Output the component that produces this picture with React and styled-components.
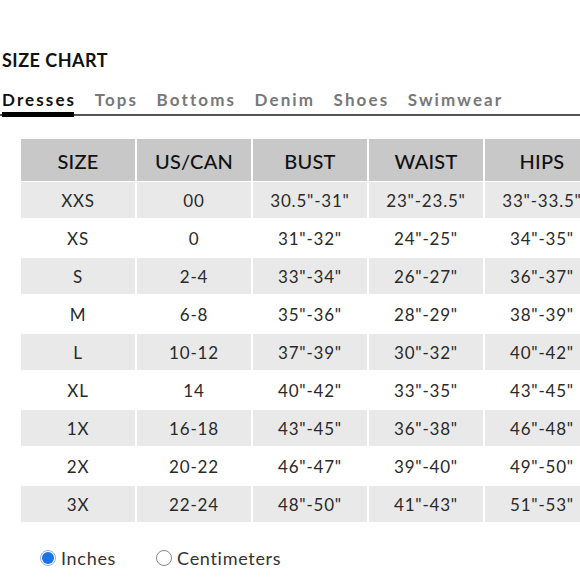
import React from "react";
import styled, { createGlobalStyle } from "styled-components";

const Global = createGlobalStyle`
  html, body { margin: 0; padding: 0; background: #fff; }
  body { font-family: Lato, "Open Sans", Arial, sans-serif; overflow: hidden; }
`;

const Page = styled.div`
  width: 580px;
  height: 580px;
  overflow: hidden;
  padding-top: 50px;
  box-sizing: border-box;
`;

const Title = styled.h2`
  margin: 0 0 0 2px;
  font-size: 18px;
  font-weight: 700;
  line-height: 20px;
  color: #111;
  letter-spacing: 0.5px;
`;

const Tabs = styled.div`
  margin-top: 20px;
  display: flex;
  gap: 18.5px;
  padding-left: 2px;
  border-bottom: 2px solid #555;
  height: 26px;
  box-sizing: border-box;
`;

const Tab = styled.div`
  font-size: 17px;
  font-weight: 700;
  letter-spacing: 2.1px;
  line-height: 20px;
  color: ${(p) => (p.$active ? "#111" : "#787878")};
  position: relative;
  &::after {
    content: "";
    display: ${(p) => (p.$active ? "block" : "none")};
    position: absolute;
    left: 0;
    right: 2px;
    bottom: -3px;
    height: 5px;
    background: #000;
  }
`;

const Table = styled.div`
  margin: 23px 0 0 21px;
  display: grid;
  grid-template-columns: repeat(5, 116px);
  width: 580px;
`;

const HeadCell = styled.div`
  background: #c8c8c8;
  height: 43px;
  display: flex;
  align-items: center;
  justify-content: center;
  padding-top: 2px;
  font-size: 20px;
  font-weight: 500;
  color: #111;
  border-right: 2px solid #fff;
  border-bottom: 1px solid #fff;
  box-sizing: border-box;
  letter-spacing: 0.2px;
`;

const Cell = styled.div`
  background: ${(p) => (p.$stripe ? "#e9e9e9" : "#fff")};
  height: 38px;
  display: flex;
  align-items: center;
  justify-content: center;
  font-size: 17px;
  color: #2a2a2a;
  border-right: 2px solid #fff;
  border-bottom: 2px solid #fff;
  box-sizing: border-box;
  letter-spacing: 0.8px;
  white-space: nowrap;
`;

const Units = styled.div`
  margin: 23px 0 0 40px;
  display: flex;
  gap: 40px;
  align-items: center;
`;

const Option = styled.label`
  display: flex;
  align-items: center;
  gap: 5px;
  font-size: 18px;
  color: #333;
  letter-spacing: 0.7px;
`;

const Radio = styled.span`
  width: 16px;
  height: 16px;
  border-radius: 50%;
  box-sizing: border-box;
  border: 1px solid ${(p) => (p.$checked ? "#8fb3e6" : "#888")};
  background: #fff;
  display: flex;
  align-items: center;
  justify-content: center;
  &::after {
    content: "";
    display: ${(p) => (p.$checked ? "block" : "none")};
    width: 12px;
    height: 12px;
    border-radius: 50%;
    background: #1a73e8;
  }
`;

const headers = ["SIZE", "US/CAN", "BUST", "WAIST", "HIPS"];
const rows = [
  ["XXS", "00", '30.5"-31"', '23"-23.5"', '33"-33.5"'],
  ["XS", "0", '31"-32"', '24"-25"', '34"-35"'],
  ["S", "2-4", '33"-34"', '26"-27"', '36"-37"'],
  ["M", "6-8", '35"-36"', '28"-29"', '38"-39"'],
  ["L", "10-12", '37"-39"', '30"-32"', '40"-42"'],
  ["XL", "14", '40"-42"', '33"-35"', '43"-45"'],
  ["1X", "16-18", '43"-45"', '36"-38"', '46"-48"'],
  ["2X", "20-22", '46"-47"', '39"-40"', '49"-50"'],
  ["3X", "22-24", '48"-50"', '41"-43"', '51"-53"'],
];

export default function App() {
  return (
    <Page>
      <Global />
      <Title>SIZE CHART</Title>
      <Tabs>
        {["Dresses", "Tops", "Bottoms", "Denim", "Shoes", "Swimwear"].map((t, i) => (
          <Tab key={t} $active={i === 0}>{t}</Tab>
        ))}
      </Tabs>
      <Table>
        {headers.map((h) => (
          <HeadCell key={h}>{h}</HeadCell>
        ))}
        {rows.map((r, ri) =>
          r.map((c, ci) => (
            <Cell key={ri + "-" + ci} $stripe={ri % 2 === 0}>{c}</Cell>
          ))
        )}
      </Table>
      <Units>
        <Option><Radio $checked />Inches</Option>
        <Option><Radio />Centimeters</Option>
      </Units>
    </Page>
  );
}
